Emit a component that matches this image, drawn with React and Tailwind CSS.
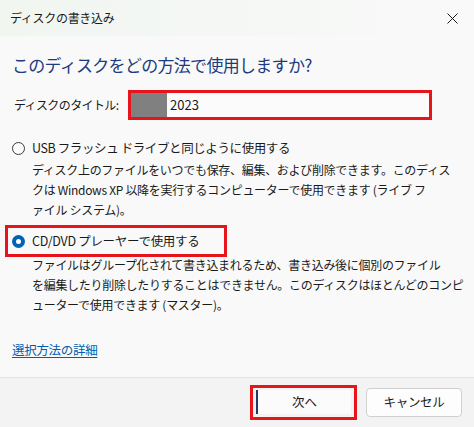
import React from 'react';

const font = { fontFamily: '"Noto Sans CJK JP", "Noto Sans", sans-serif' };

const App = () => {
  return (
    <div
      className="w-[474px] h-[427px] bg-[#f9f9f9] flex flex-col text-[#1a1a1a] overflow-hidden"
      style={font}
    >
      {/* Title bar */}
      <div className="h-[36px] shrink-0 flex items-center justify-between pl-[10px] pr-[14px] bg-gradient-to-r from-[#f1f6f1] to-[#f9f9f9]">
        <span className="text-[12px] tracking-[-0.3px]">ディスクの書き込み</span>
        <svg width="11" height="11" viewBox="0 0 11 11" className="mr-[2px]">
          <path d="M0.5 0.5 L10.5 10.5 M10.5 0.5 L0.5 10.5" stroke="#1a1a1a" strokeWidth="1" />
        </svg>
      </div>

      <div className="flex flex-col shrink-0 px-[12px]">
        {/* Main instruction */}
        <h1 className="mt-[16px] text-[17px] leading-[26px] text-[#1c3b80] tracking-[-0.7px]">
          このディスクをどの方法で使用しますか?
        </h1>

        {/* Title */}
        <div className="mt-[12px] flex items-center">
          <label className="w-[116px] pl-[2px] text-[12px] tracking-[-0.6px]">ディスクのタイトル:</label>
          <div className="w-[304px] h-[30px] border-[3px] border-[#e8141c] bg-[#fbfbfb] flex items-stretch">
            <div className="w-[36px] bg-[#808080]" />
            <span className="ml-[3px] self-center text-[13px]">2023</span>
          </div>
        </div>

        {/* USB option */}
        <div className="mt-[18px] flex items-center h-[20px]">
          <span className="w-[13px] h-[13px] rounded-full border border-[#3a3a3a] bg-[#fbfbfb]" />
          <span className="ml-[7px] text-[12.5px] tracking-[-0.4px]">USB フラッシュ ドライブと同じように使用する</span>
        </div>
        <p className="pl-[20px] mt-[2px] text-[12px] leading-[20px] tracking-[-0.3px] whitespace-nowrap">
          ディスク上のファイルをいつでも保存、編集、および削除できます。このディス
          <br />
          クは Windows XP 以降を実行するコンピューターで使用できます (ライブ フ
          <br />
          ァイル システム)。
        </p>

        {/* CD/DVD option */}
        <div className="mt-[5px] -ml-[7px] w-[222px] h-[32px] border-[3px] border-[#e8141c] flex items-center pl-[4px]">
          <span className="w-[13px] h-[13px] rounded-full bg-[#0063b8] flex items-center justify-center">
            <span className="w-[5px] h-[5px] rounded-full bg-white" />
          </span>
          <span className="ml-[7px] text-[12.5px] tracking-[-0.3px]">CD/DVD プレーヤーで使用する</span>
        </div>
        <p className="pl-[20px] -mt-[2px] text-[12px] leading-[20px] tracking-[-0.3px] whitespace-nowrap">
          ファイルはグループ化されて書き込まれるため、書き込み後に個別のファイル
          <br />
          を編集したり削除したりすることはできません。このディスクはほとんどのコンピ
          <br />
          ューターで使用できます (マスター)。
        </p>

        {/* Link */}
        <a className="mt-[25px] text-[12.5px] leading-[20px] text-[#0060b0] underline underline-offset-2 w-fit tracking-[-0.3px]">
          選択方法の詳細
        </a>
      </div>

      <div className="flex-1" />

      {/* Footer */}
      <div className="h-[50px] shrink-0 border-t border-[#e3e3e3] bg-[#f3f3f3] flex items-center justify-end pr-[12px] gap-[9px]">
        <div className="w-[107px] h-[35px] border-[3px] border-[#e8141c] p-[3px] pt-[2px]">
          <div className="h-full bg-[#fbfbfb] border-l-2 border-[#1f3a6a] flex items-center justify-center text-[12.5px]">
            次へ
          </div>
        </div>
        <button className="w-[96px] h-[29px] rounded-[4px] border border-[#d0d0d0] bg-[#fdfdfd] text-[12.5px] tracking-[-0.3px]">
          キャンセル
        </button>
      </div>
    </div>
  );
};

export default App;
